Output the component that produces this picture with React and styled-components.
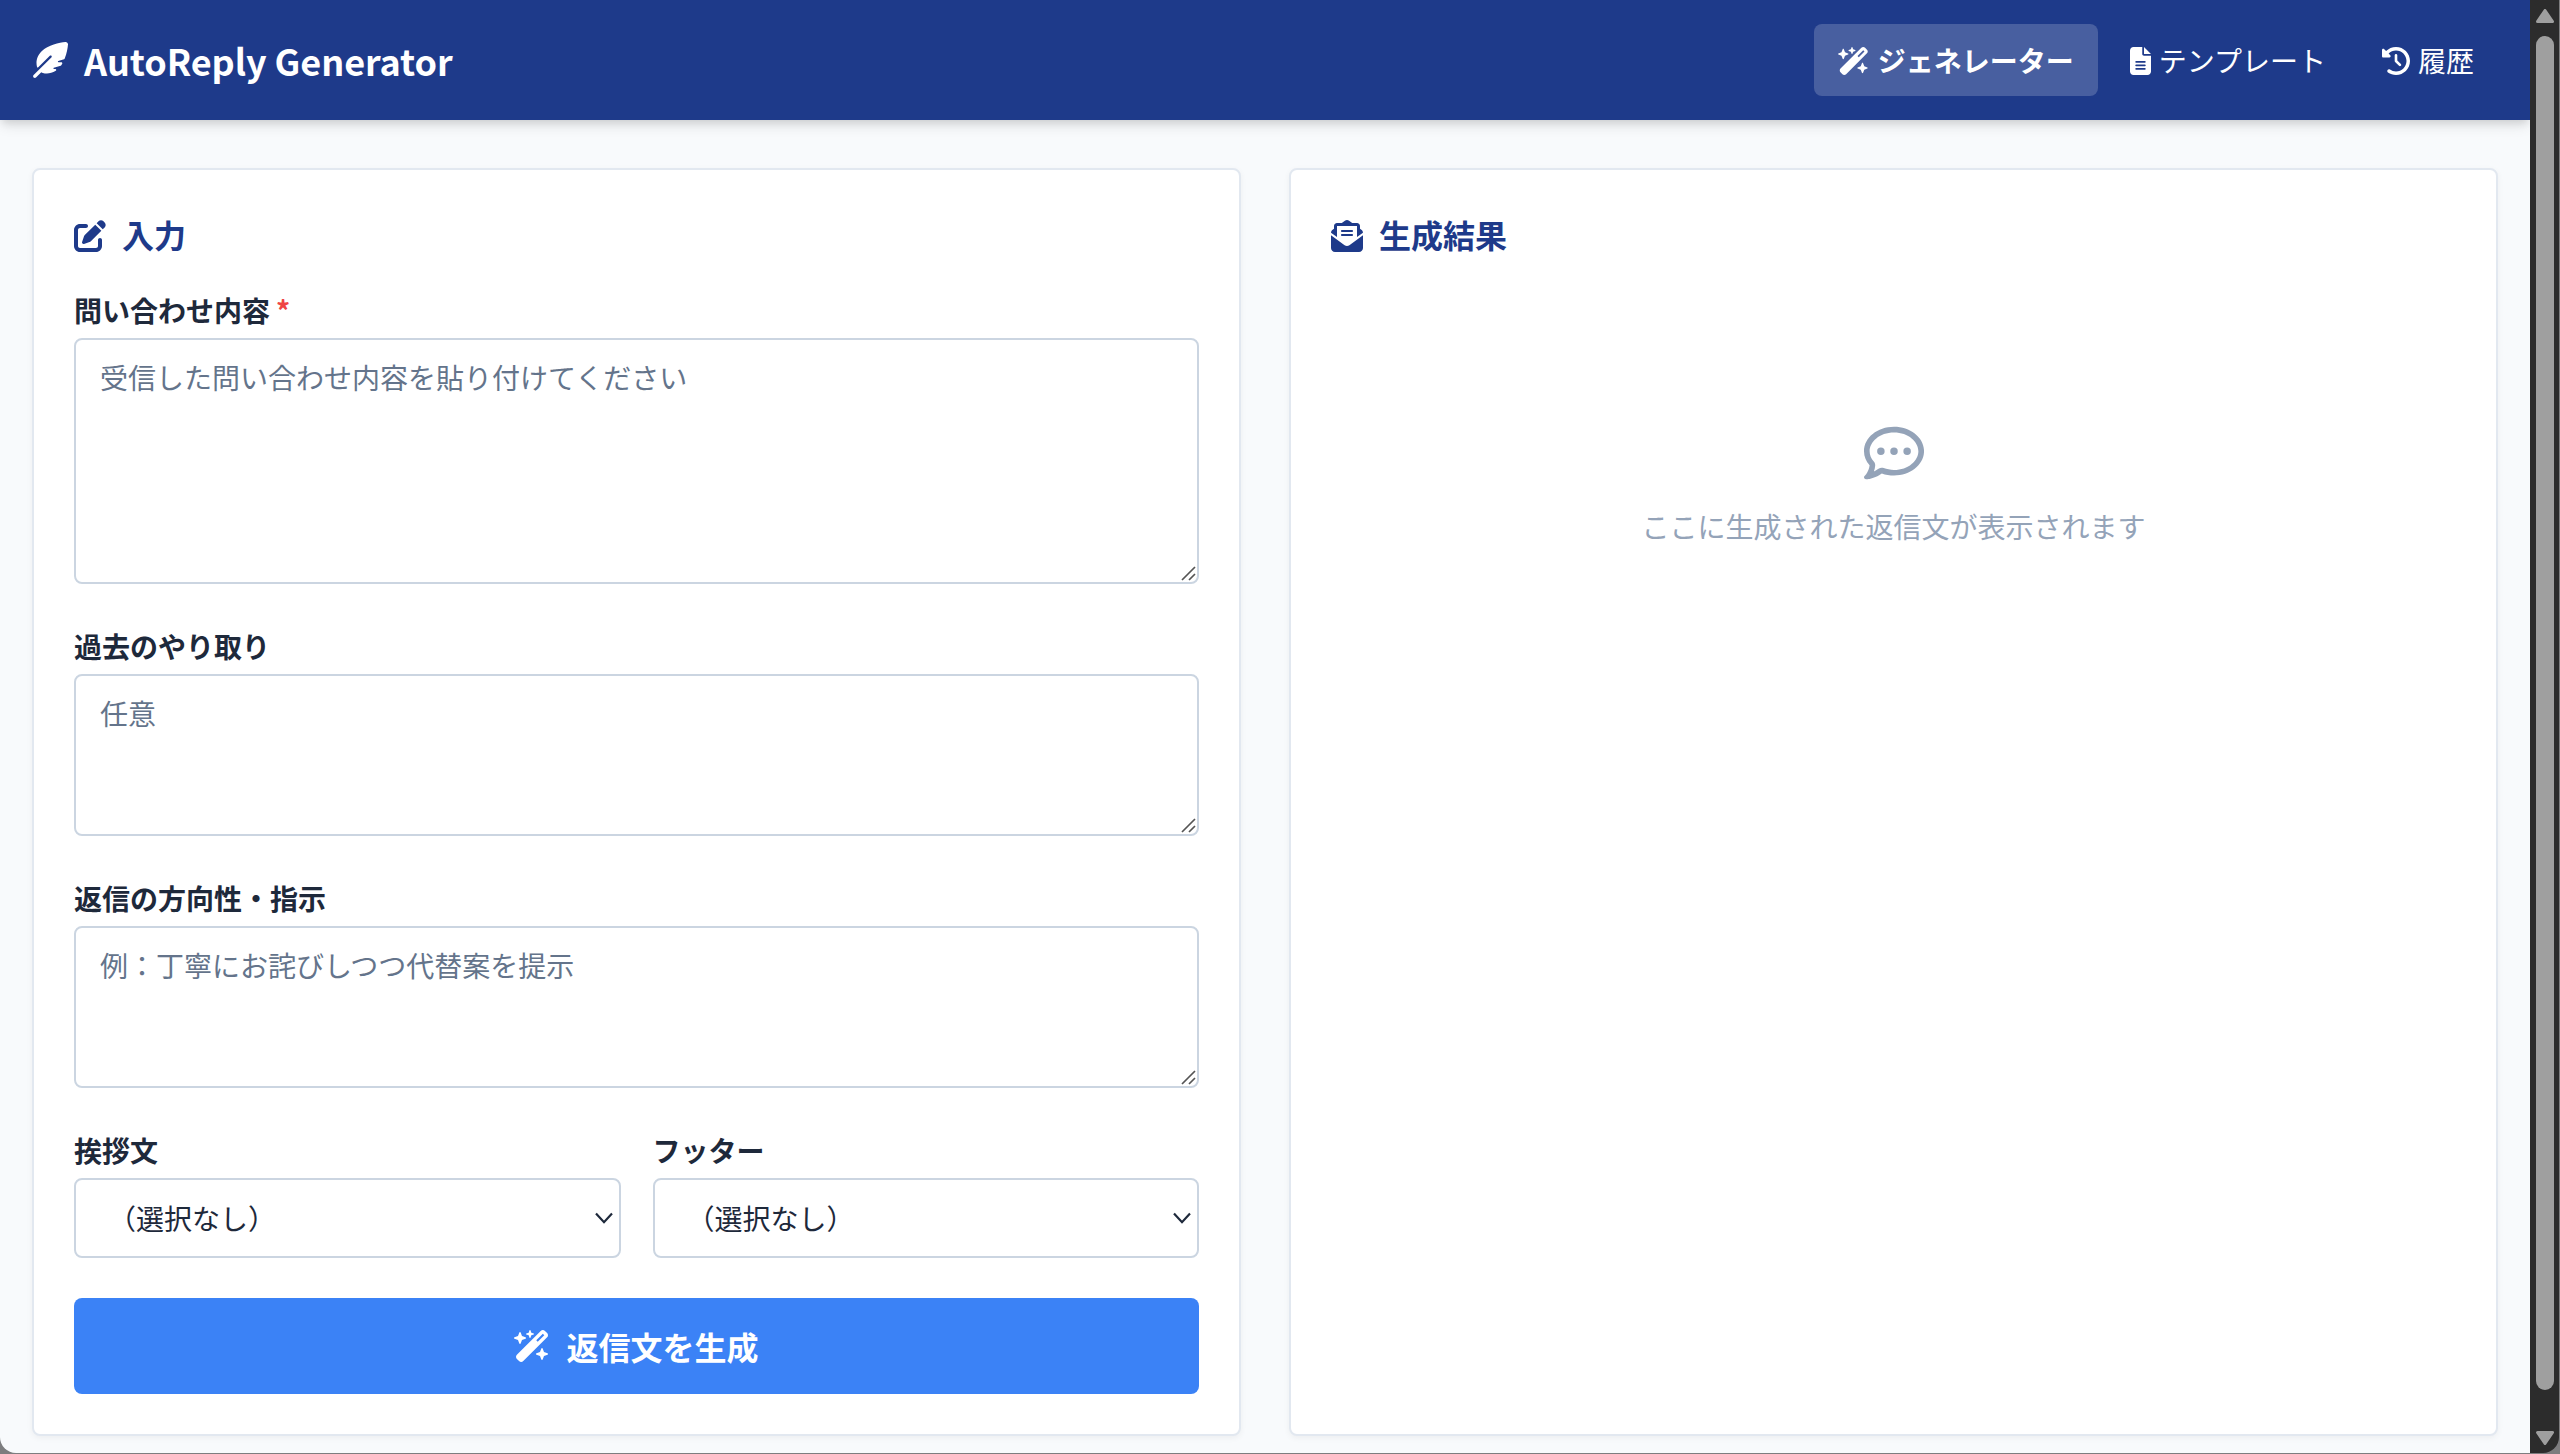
import React from "react";
import styled, { createGlobalStyle } from "styled-components";
import {
  FaFeatherPointed,
  FaWandMagicSparkles,
  FaFileLines,
  FaClockRotateLeft,
  FaPenToSquare,
  FaEnvelopeOpenText,
  FaRegCommentDots,
} from "react-icons/fa6";

const GlobalStyle = createGlobalStyle`
  *, *::before, *::after { box-sizing: border-box; }
  html, body { margin: 0; height: 100%; overflow: hidden; }
  body {
    background: #7d7d7f;
    color: #1e293b;
    font-family: "Noto Sans CJK JP", "Noto Sans", sans-serif;
    font-size: 28px;
    line-height: 42px;
  }
`;

const Window = styled.div`
  display: flex;
  width: 2559px;
  height: 1453px;
  overflow: hidden;
  border-radius: 0 0 16px 16px;
`;

const Page = styled.div`
  flex: none;
  width: 2530px;
  display: flex;
  flex-direction: column;
  background: #f8fafc;
`;

const Header = styled.header`
  display: flex;
  align-items: center;
  justify-content: space-between;
  flex: none;
  height: 120px;
  padding: 0 32px;
  background: #1e3a8a;
  color: #fff;
  box-shadow: 0 8px 12px -2px rgba(0, 0, 0, 0.1), 0 4px 8px -2px rgba(0, 0, 0, 0.1);
`;

const Brand = styled.div`
  display: flex;
  align-items: center;
  gap: 16px;
  font-size: 36px;
  font-weight: 700;
  line-height: 60px;
  letter-spacing: -0.07px;
`;

const Nav = styled.nav`
  display: flex;
  gap: 8px;
`;

const NavItem = styled.a`
  display: flex;
  align-items: center;
  gap: 8px;
  height: 72px;
  padding: 0 24px;
  border-radius: 8px;
  color: #fff;
  font-weight: ${(p) => (p.$active ? 700 : 400)};
  background: ${(p) => (p.$active ? "rgba(255,255,255,0.19)" : "transparent")};
  svg {
    flex: none;
    width: ${(p) => p.$iconWidth}px;
    height: 28px;
    margin-top: 2px;
  }
`;

const Main = styled.main`
  display: grid;
  grid-template-columns: 1fr 1fr;
  gap: 48px;
  padding: 48px 32px 0;
`;

const Card = styled.section`
  height: 1268px;
  padding: 40px;
  background: #fff;
  border: 2px solid #e2e8f0;
  border-radius: 8px;
  box-shadow: 0 2px 6px rgba(0, 0, 0, 0.05);
`;

const CardTitle = styled.h2`
  display: flex;
  align-items: center;
  gap: 16px;
  height: 48px;
  margin: 0 0 30px;
  color: #1e3a8a;
  font-size: 32px;
  font-weight: 700;
  svg { margin-top: 3px; }
`;

const Field = styled.div`
  flex: 1;
  margin-bottom: 40px;
`;

const Label = styled.label`
  display: block;
  height: 50px;
  font-weight: 700;
  line-height: 44px;
`;

const Required = styled.span`
  margin-left: 6px;
  color: #ef4444;
`;

const Control = styled.div`
  position: relative;
  display: flex;
`;

const TextArea = styled.textarea`
  display: block;
  width: 100%;
  height: ${(p) => p.$height}px;
  padding: 16px 24px;
  border: 2px solid #cbd5e1;
  border-radius: 8px;
  background: #fff;
  font: inherit;
  resize: none;
  outline: none;
  &::placeholder { color: #64748b; opacity: 1; }
`;

const Grip = styled.svg`
  position: absolute;
  right: 3px;
  bottom: 3px;
  width: 15px;
  height: 15px;
  fill: none;
  stroke: #555;
  stroke-width: 1.7;
`;

const Select = styled.select`
  appearance: none;
  width: 100%;
  height: 80px;
  padding: 0 32px;
  border: 2px solid #cbd5e1;
  border-radius: 8px;
  background: #fff;
  color: #1e293b;
  font: inherit;
`;

const Caret = styled.svg`
  position: absolute;
  right: 8px;
  top: 33px;
  width: 18px;
  height: 14px;
  fill: none;
  stroke: #1e293b;
  stroke-width: 2.2;
`;

const Columns = styled.div`
  display: flex;
  gap: 32px;
`;

const Submit = styled.button`
  display: flex;
  align-items: center;
  justify-content: center;
  gap: 16px;
  width: 100%;
  height: 96px;
  border: 0;
  border-radius: 8px;
  background: #3b82f6;
  color: #fff;
  font: inherit;
  font-size: 32px;
  font-weight: 700;
  svg { flex: none; width: 36px; height: 32px; }
`;

const Empty = styled.div`
  display: flex;
  flex-direction: column;
  align-items: center;
  gap: 22px;
  padding-top: 135px;
  color: #94a3b8;
  svg { font-size: 60px; }
`;

const ScrollTrack = styled.div`
  display: flex;
  flex-direction: column;
  align-items: center;
  flex: 1;
  padding: 9px 0 8px 1px;
  background: #2c2c2c;
`;

const ScrollArrow = styled.svg`
  width: 18px;
  height: 14px;
  fill: #9f9f9f;
  stroke: #9f9f9f;
  stroke-width: 3;
  stroke-linejoin: round;
`;

const ScrollThumb = styled.div`
  flex: 1;
  width: 18px;
  margin: 13px 0 41px;
  border-radius: 9px;
  background: #9f9f9f;
`;

function TextField({ label, required, placeholder, height }) {
  return (
    <Field>
      <Label>
        {label}
        {required && <Required>*</Required>}
      </Label>
      <Control>
        <TextArea $height={height} placeholder={placeholder} />
        <Grip viewBox="0 0 15 15">
          <path d="M1 14L14 1M8 14L14 8" />
        </Grip>
      </Control>
    </Field>
  );
}

function SelectField({ label }) {
  return (
    <Field>
      <Label>{label}</Label>
      <Control>
        <Select>
          <option>（選択なし）</option>
        </Select>
        <Caret viewBox="0 0 18 14">
          <path d="M1 2.5L9 11.2L17 2.5" />
        </Caret>
      </Control>
    </Field>
  );
}

export default function App() {
  return (
    <>
      <GlobalStyle />
      <Window>
        <Page>
          <Header>
            <Brand>
              <FaFeatherPointed />
              AutoReply Generator
            </Brand>
            <Nav>
              <NavItem $active $iconWidth={31.5}>
                <FaWandMagicSparkles viewBox="0 0 576 512" />
                ジェネレーター
              </NavItem>
              <NavItem $iconWidth={21}>
                <FaFileLines viewBox="0 0 384 512" />
                テンプレート
              </NavItem>
              <NavItem $iconWidth={28}>
                <FaClockRotateLeft />
                履歴
              </NavItem>
            </Nav>
          </Header>
          <Main>
            <Card>
              <CardTitle>
                <FaPenToSquare />
                入力
              </CardTitle>
              <TextField
                label="問い合わせ内容"
                required
                placeholder="受信した問い合わせ内容を貼り付けてください"
                height={246}
              />
              <TextField label="過去のやり取り" placeholder="任意" height={162} />
              <TextField
                label="返信の方向性・指示"
                placeholder="例：丁寧にお詫びしつつ代替案を提示"
                height={162}
              />
              <Columns>
                <SelectField label="挨拶文" />
                <SelectField label="フッター" />
              </Columns>
              <Submit>
                <FaWandMagicSparkles viewBox="0 0 576 512" />
                返信文を生成
              </Submit>
            </Card>
            <Card>
              <CardTitle>
                <FaEnvelopeOpenText />
                生成結果
              </CardTitle>
              <Empty>
                <FaRegCommentDots />
                ここに生成された返信文が表示されます
              </Empty>
            </Card>
          </Main>
        </Page>
        <ScrollTrack>
          <ScrollArrow viewBox="0 0 18 14">
            <path d="M9 1.5L16.5 12.5H1.5Z" />
          </ScrollArrow>
          <ScrollThumb />
          <ScrollArrow viewBox="0 0 18 14">
            <path d="M9 12.5L16.5 1.5H1.5Z" />
          </ScrollArrow>
        </ScrollTrack>
      </Window>
    </>
  );
}
